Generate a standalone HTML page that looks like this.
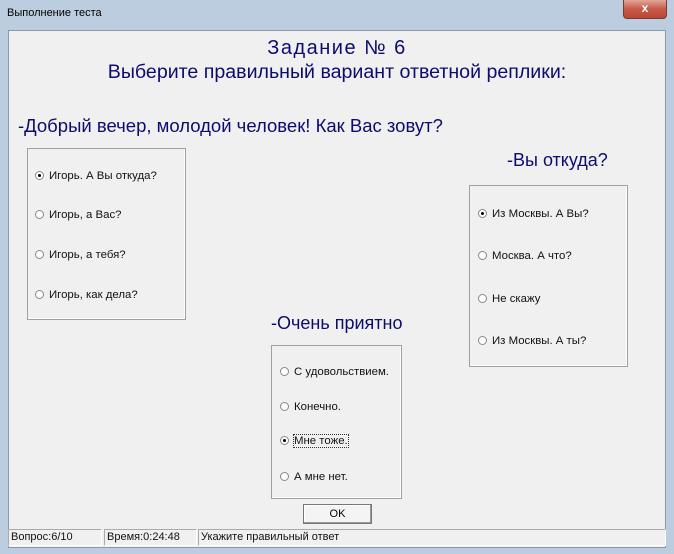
<!DOCTYPE html>
<html><head><meta charset="utf-8"><style>
*{margin:0;padding:0;box-sizing:border-box}
body{width:674px;height:554px;overflow:hidden;background:#bccde0;font-family:"Liberation Sans",sans-serif;position:relative}
.abs{position:absolute}
.title{left:7px;top:7px;font-size:11px;color:#000}
.close{left:623px;top:0;width:44px;height:19px;background:linear-gradient(#e0a898,#c85a48 50%,#b84834);border:1px solid #7a3a30;border-top:none;border-radius:0 0 4px 4px;color:#fff;font-size:12px;font-weight:bold;text-align:center;line-height:17px}
.client{left:8px;top:30px;width:658px;height:518px;background:#f0f0f0;border:1px solid #8a9aac}
.h{color:#0c0c6e;font-size:18px;white-space:nowrap}
.box{border:1px solid #a0a0a0;box-shadow:inset -1px -1px 0 #fff}
.opt{position:absolute;font-size:11.4px;color:#111;white-space:nowrap;line-height:13px}
.r{display:inline-block;width:9px;height:9px;border-radius:50%;border:1px solid #888;background:#fff;vertical-align:-1px;margin-right:5px;position:relative}
.r.on::after{content:"";position:absolute;left:2px;top:2px;width:3px;height:3px;border-radius:50%;background:#000}
.btn{left:303px;top:504px;width:69px;height:20px;border:1px solid #777;background:#f4f4f4;box-shadow:inset -1px -1px 0 #999,inset 1px 1px 0 #fff;text-align:center;font-size:11px;line-height:18px}
.sp{top:529px;height:17px;border:1px solid #aaa;border-right-color:#fff;border-bottom-color:#fff;font-size:11px;line-height:15px;padding-left:2px;color:#111}
</style></head><body>
<div class="abs title">Выполнение теста</div>
<div class="abs close">x</div>
<div class="abs client"></div>
<div class="abs h" style="left:0;width:674px;text-align:center;top:37px;font-size:20px;letter-spacing:1.5px">Задание № 6</div>
<div class="abs h" style="left:0;width:674px;text-align:center;top:61px;font-size:19.6px">Выберите правильный вариант ответной реплики:</div>
<div class="abs h" style="left:18px;top:115px;font-size:18.5px">-Добрый вечер, молодой человек! Как Вас зовут?</div>
<div class="abs h" style="left:507px;top:150px">-Вы откуда?</div>
<div class="abs h" style="left:271px;top:313px">-Очень приятно</div>

<div class="abs box" style="left:27px;top:148px;width:159px;height:172px"></div>
<div class="opt" style="left:35px;top:170px"><span class="r on"></span>Игорь. А Вы откуда?</div>
<div class="opt" style="left:35px;top:209px"><span class="r"></span>Игорь, а Вас?</div>
<div class="opt" style="left:35px;top:249px"><span class="r"></span>Игорь, а тебя?</div>
<div class="opt" style="left:35px;top:289px"><span class="r"></span>Игорь, как дела?</div>

<div class="abs box" style="left:469px;top:185px;width:159px;height:182px"></div>
<div class="opt" style="left:478px;top:208px"><span class="r on"></span>Из Москвы. А Вы?</div>
<div class="opt" style="left:478px;top:250px"><span class="r"></span>Москва. А что?</div>
<div class="opt" style="left:478px;top:293px"><span class="r"></span>Не скажу</div>
<div class="opt" style="left:478px;top:335px"><span class="r"></span>Из Москвы. А ты?</div>

<div class="abs box" style="left:271px;top:345px;width:131px;height:154px"></div>
<div class="opt" style="left:280px;top:366px"><span class="r"></span>С удовольствием.</div>
<div class="opt" style="left:280px;top:401px"><span class="r"></span>Конечно.</div>
<div class="opt" style="left:280px;top:435px"><span class="r on"></span><span style="outline:1px dotted #333">Мне тоже.</span></div>
<div class="opt" style="left:280px;top:471px"><span class="r"></span>А мне нет.</div>

<div class="abs btn">OK</div>
<div class="abs sp" style="left:8px;width:94px">Вопрос:6/10</div>
<div class="abs sp" style="left:104px;width:93px">Время:0:24:48</div>
<div class="abs sp" style="left:198px;width:468px">Укажите правильный ответ</div>
</body></html>
